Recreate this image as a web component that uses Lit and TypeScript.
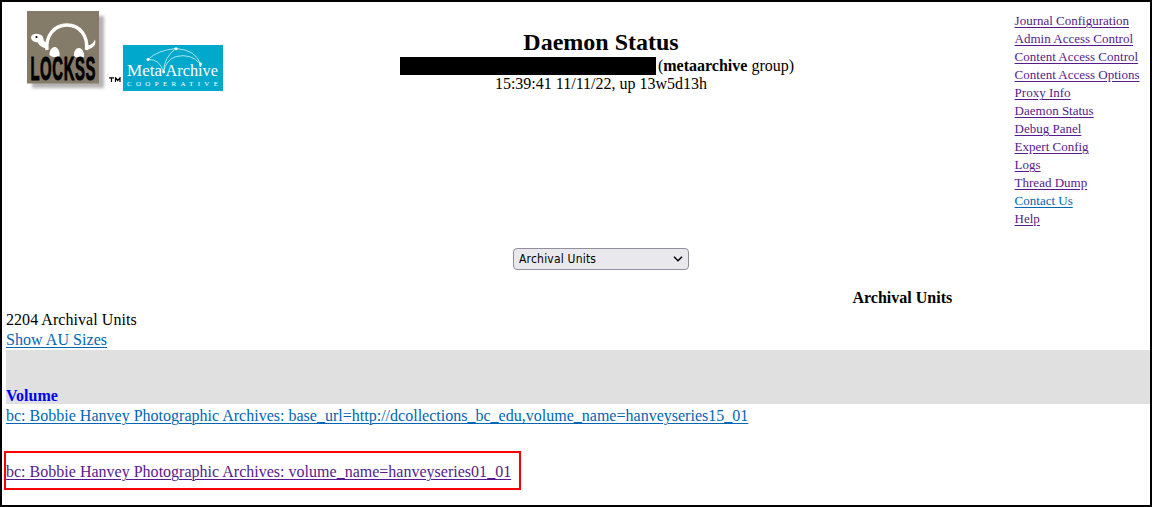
import { LitElement, html, css } from "lit";
import { customElement } from "lit/decorators.js";

interface NavLink {
  label: string;
  fresh?: boolean;
}

const NAV: NavLink[] = [
  { label: "Journal Configuration" },
  { label: "Admin Access Control" },
  { label: "Content Access Control" },
  { label: "Content Access Options" },
  { label: "Proxy Info" },
  { label: "Daemon Status" },
  { label: "Debug Panel" },
  { label: "Expert Config" },
  { label: "Logs" },
  { label: "Thread Dump" },
  { label: "Contact Us", fresh: true },
  { label: "Help" },
];

@customElement("lockss-logo")
class LockssLogo extends LitElement {
  static styles = css`
    :host { display: block; width: 82px; height: 82px; }
    svg { display: block; overflow: visible; }
    .plate { fill: #857b69; }
    .shade { fill: #777; opacity: 0.55; }
    .word { font: bold 24px "Liberation Sans", Arial, sans-serif; fill: #000; stroke: #000; stroke-width: 0.7; }
    .white { fill: #fff; }
    .shell { fill: none; stroke: #fff; stroke-width: 3.4; }
  `;
  render() {
    return html`<svg width="82" height="82" viewBox="0 0 82 82">
      <defs><filter id="soft" x="-20%" y="-20%" width="140%" height="140%"><feGaussianBlur stdDeviation="1.8" /></filter></defs>
      <rect class="shade" x="5" y="5" width="72" height="72" filter="url(#soft)" />
      <rect class="plate" width="72" height="72.5" />
      <path class="shell" d="M20 39 C18.5 25 27 14 40 14 C53 14 61 25 59.5 39" />
      <path class="white" d="M4 26 C5 23 9 22 13 23.5 C16 24.5 16.5 27 17 30 L21 33 L21 38 C17 37 11.5 35 11 31.5 C7 31 4 29.5 4 26 Z" />
      <path class="white" d="M59 34 C63 35 66 33 68 28.5 C69.5 33 67 37.5 59 39 Z" />
      <circle cx="9.5" cy="26" r="1.1" />
      <path class="white" d="M22.5 44 C22 40 25 35.5 28 36 C31 36.5 33 40.5 32.5 45 C29 46.5 25 46.5 22.5 44 Z" />
      <path class="white" d="M47 45 C46.5 40.5 49 37 52 37 C55 37 57.5 41 57 46 C54 47.5 50 47.5 47 45 Z" />
      <g transform="translate(3.4 68.8) scale(0.62 1.38)"><text class="word" x="0" y="0" textLength="105" lengthAdjust="spacing">LOCKSS</text></g>
    </svg>`;
  }
}

@customElement("metaarchive-logo")
class MetaArchiveLogo extends LitElement {
  static styles = css`
    :host { display: block; width: 100px; height: 46px; }
    svg { display: block; overflow: visible; }
    .bg { fill: #00a8cc; }
    .name { font: 17px "Liberation Serif", serif; fill: #fff; }
    .coop { font: 7px "Liberation Serif", serif; fill: #fff; }
    .arc { fill: none; stroke: #d8f2f8; stroke-width: 0.8; }
    .dot { fill: #fff; }
  `;
  render() {
    return html`<svg width="100" height="46" viewBox="0 0 100 46">
      <rect class="bg" width="100" height="46" />
      <path class="arc" d="M25 14.5 Q35 5 53 3.5 Q73 5 77.5 19" />
      <path class="arc" d="M25 14.5 Q37 14 40.5 27 Q41 12 53 3.5" />
      <path class="arc" d="M40.5 27 Q43 15 53 11.5 Q68 8 77.5 19" />
      <circle class="dot" cx="25" cy="14.5" r="1.5" />
      <circle class="dot" cx="53" cy="3.7" r="1.5" />
      <circle class="dot" cx="77.5" cy="19" r="1.5" />
      <circle class="dot" cx="40.7" cy="27" r="1.4" />
      <text class="name" x="4" y="31" textLength="35" lengthAdjust="spacingAndGlyphs">Meta</text>
      <text class="name" x="42.5" y="31" textLength="52.5" lengthAdjust="spacingAndGlyphs">Archive</text>
      <text class="coop" x="4" y="40.7" textLength="91">COOPERATIVE</text>
    </svg>`;
  }
}

@customElement("app-root")
class AppRoot extends LitElement {
  static styles = css`
    :host {
      display: block;
      box-sizing: border-box;
      width: 1152px;
      height: 507px;
      border: 2px solid #000;
      background: #fff;
      color: #000;
      overflow: hidden;
      font: 16px/18px "Liberation Serif", "Times New Roman", serif;
    }
    a { color: #551a8b; text-decoration: underline; text-decoration-thickness: 1px; text-underline-offset: 2px; cursor: pointer; }
    a.fresh { color: #0066b4; }
    header { display: grid; grid-template-columns: 390px 418px 1fr; height: 246px; }
    .logos { display: flex; align-items: flex-start; padding: 9px 0 0 25px; }
    .tm { width: 14px; padding-top: 66px; }
    .tm svg { display: block; }
    .meta { padding-top: 34px; }
    .title { padding-top: 26px; text-align: center; white-space: nowrap; }
    h1 { margin: 0; font-size: 24px; line-height: 28px; padding-bottom: 1px; }
    .host { display: flex; justify-content: center; gap: 2px; padding-right: 8px; }
    .redacted { width: 256px; height: 18px; background: #000; }
    nav { display: flex; flex-direction: column; align-items: flex-start; padding: 10px 0 0 204.6px; font-size: 13px; white-space: nowrap; }
    .picker {
      display: flex; align-items: center; justify-content: space-between;
      box-sizing: border-box; width: 176px; height: 22px; margin-left: 511px; padding: 0 5px;
      border: 1px solid #8f8f9d; border-radius: 4px; background: #e9e9ed;
      font: 12px/20px "DejaVu Sans Condensed", "DejaVu Sans", sans-serif; font-stretch: condensed; letter-spacing: 0.2px;
    }
    h2 { margin: 19px 0 0 850.5px; font-size: 16px; line-height: 18px; white-space: nowrap; }
    .summary { padding: 3px 0 0 4px; line-height: 20px; letter-spacing: 0.05px; }
    .head { display: flex; align-items: flex-end; box-sizing: border-box; height: 54px; margin-left: 4px; background: #e0e0e0; color: #0000ee; font-weight: bold; line-height: 17px; }
    .row { margin-left: 4px; line-height: 20px; height: 47px; padding-top: 2px; box-sizing: border-box; letter-spacing: 0.008px; }
    .marked { display: flex; align-items: center; box-sizing: border-box; width: 517px; height: 39px; margin-left: 2px; padding-top: 2px; border: 2px solid #f00; white-space: nowrap; letter-spacing: 0.01px; }
  `;

  render() {
    return html`
      <header>
        <div class="logos">
          <lockss-logo></lockss-logo>
          <div class="tm"><svg width="12" height="6" viewBox="0 0 12 6" fill="none" stroke="#000" stroke-width="1.2"><path d="M0 .8H5M2.5 .5V5M6.5 5V.8L8.8 3.5L11 .8V5" /></svg></div>
          <metaarchive-logo class="meta"></metaarchive-logo>
        </div>
        <div class="title">
          <h1>Daemon Status</h1>
          <div class="host"><span class="redacted"></span><span>(<b>metaarchive</b> group)</span></div>
          <div>15:39:41 11/11/22, up 13w5d13h</div>
        </div>
        <nav>${NAV.map((n) => html`<a class=${n.fresh ? "fresh" : ""}>${n.label}</a>`)}</nav>
      </header>
      <div class="picker">
        <span>Archival Units</span>
        <svg width="10" height="6" viewBox="0 0 10 6" fill="none" stroke="#000" stroke-width="1.5"><path d="M1 .8L5 4.8L9 .8" /></svg>
      </div>
      <h2>Archival Units</h2>
      <div class="summary">
        <div>2204 Archival Units</div>
        <a class="fresh">Show AU Sizes</a>
      </div>
      <div class="head">Volume</div>
      <div class="row"><a class="fresh">bc: Bobbie Hanvey Photographic Archives: base_url=http://dcollections_bc_edu,volume_name=hanveyseries15_01</a></div>
      <div class="marked"><a>bc: Bobbie Hanvey Photographic Archives: volume_name=hanveyseries01_01</a></div>
    `;
  }
}
